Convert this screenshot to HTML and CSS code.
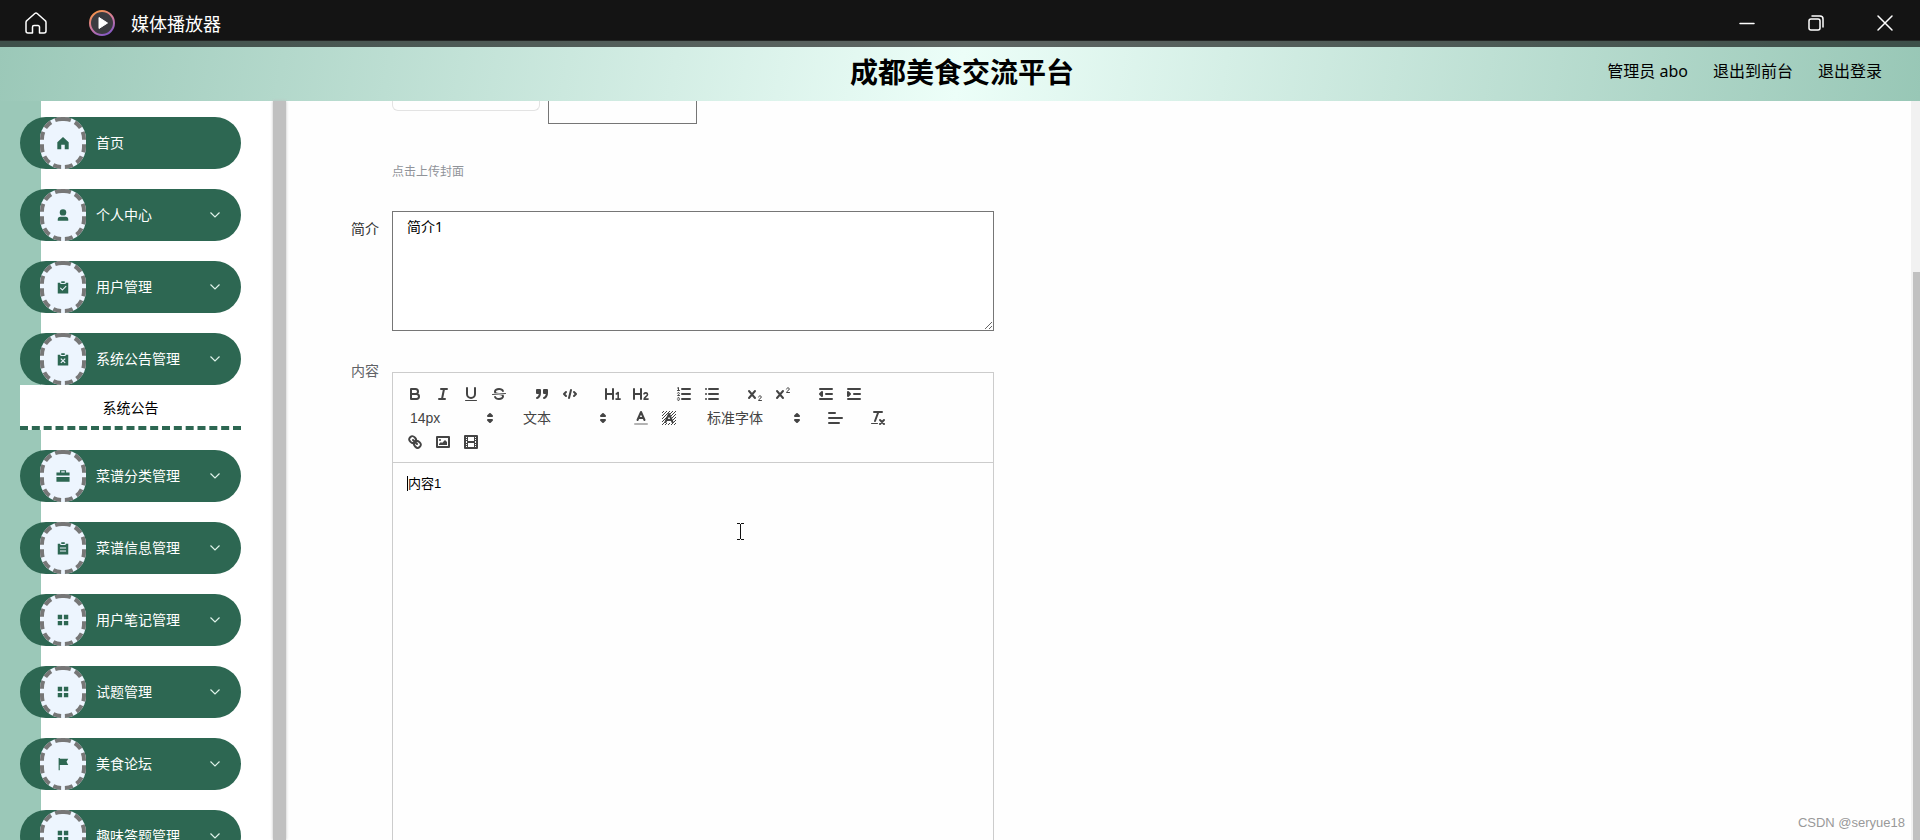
FILE: index.html
```html
<!DOCTYPE html>
<html lang="zh-CN">
<head>
<meta charset="utf-8">
<title>成都美食交流平台</title>
<link rel="stylesheet" href="styles.css">
</head>
<body>
<svg class="defs" aria-hidden="true">
  <defs>
    <linearGradient id="ring" x1="0.2" y1="0" x2="0.7" y2="1"><stop offset="0" stop-color="#f79446"/><stop offset=".5" stop-color="#d27ba0"/><stop offset="1" stop-color="#8458c4"/></linearGradient>
    <pattern id="hatch" width="3" height="3" patternUnits="userSpaceOnUse"><path d="M0 2h1v1H0zM1 1h1v1H1zM2 0h1v1H2z" fill="#444"/></pattern>
    <symbol id="chevron" viewBox="0 0 12 12"><path d="M1.500 3.500 6 8 10.500 3.500" fill="none" stroke="#dff3ea" stroke-width="1.200"/></symbol>
    <symbol id="caret" viewBox="0 0 18 18"><path class="fs" d="M7 11 9 13 11 11zM7 7 9 5 11 7z"/></symbol>
    <symbol id="grid" viewBox="0 0 16 16"><path d="M2 2h5v5H2zM9 2h5v5H9zM2 9h5v5H2zM9 9h5v5H9z"/></symbol>
    <symbol id="dashes" viewBox="0 0 46 52"><path class="dash" d="M23 2h-1A20 20 0 0 0 2 22v8A20 20 0 0 0 22 50h1"/><path class="dash" d="M23 2h1A20 20 0 0 1 44 22v8A20 20 0 0 1 24 50h-1"/></symbol>
  </defs>
</svg>
<div class="page">
  <header class="titlebar">
    <button class="win" aria-label="主页"><svg width="24" height="24" viewBox="0 0 24 24"><path d="M3 9.500 10.800 2.500a1.800 1.800 0 0 1 2.400 0L21 9.500a2 2 0 0 1 1 1.700V20a2 2 0 0 1-2 2h-4.500v-6a1.500 1.500 0 0 0-1.500-1.500h-4A1.500 1.500 0 0 0 8.500 16v6H4a2 2 0 0 1-2-2v-8.800a2 2 0 0 1 1-1.700z" class="white"/></svg></button>
    <svg class="player" width="28" height="28" viewBox="0 0 28 28"><circle cx="14" cy="14" r="12" fill="#3b3b40" stroke="url(#ring)" stroke-width="2"/><path d="M11 8.500 19.500 14 11 19.500z" fill="#fff" stroke="#fff" stroke-linejoin="round"/></svg>
    <span class="apptitle">媒体播放器</span>
    <div class="controls">
      <button class="win" aria-label="最小化"><svg width="18" height="18" viewBox="0 0 18 18"><path class="white" d="M2 9.500h14"/></svg></button>
      <button class="win" aria-label="还原"><svg width="18" height="18" viewBox="0 0 18 18"><rect class="white" x="2" y="5" width="11" height="11" rx="2"/><path class="white" d="M5 2h8a3 3 0 0 1 3 3v8"/></svg></button>
      <button class="win" aria-label="关闭"><svg width="18" height="18" viewBox="0 0 18 18"><path class="white" d="M2 2 16 16M16 2 2 16"/></svg></button>
    </div>
  </header>

  <div class="banner">
    <h1>成都美食交流平台</h1>
    <div class="account"><span>管理员 abo</span><a href="#">退出到前台</a><a href="#">退出登录</a></div>
  </div>

  <div class="body">
    <nav class="side">
      <button class="item"><span class="badge"><svg class="edge"><use href="#dashes"/></svg><svg class="icon" viewBox="0 0 16 16"><path d="M8 1 14.500 7v8H10v-5H6v5H1.500V7z"/></svg></span><span>首页</span></button>
      <button class="item"><span class="badge"><svg class="edge"><use href="#dashes"/></svg><svg class="icon" viewBox="0 0 16 16"><circle cx="8" cy="5" r="3.700"/><path d="M2 14.500V13a3 3 0 0 1 3-3h6a3 3 0 0 1 3 3v1.500z"/></svg></span><span>个人中心</span><svg class="chev"><use href="#chevron"/></svg></button>
      <button class="item"><span class="badge"><svg class="edge"><use href="#dashes"/></svg><svg class="icon" viewBox="0 0 16 16"><path fill-rule="evenodd" d="M2 3h3v1.500h6V3h3v12.500H2zM4.500 9.500 7.300 12.300 12 7.500 11.200 6.700 7.300 10.700 5.300 8.700z"/><path d="M6 1.500h4V3.500H6z"/></svg></span><span>用户管理</span><svg class="chev"><use href="#chevron"/></svg></button>
      <div class="group">
        <button class="item"><span class="badge"><svg class="edge"><use href="#dashes"/></svg><svg class="icon" viewBox="0 0 16 16"><path d="M2 3h3v1.500h6V3h3v12.500H2zM6 1.500h4V3.500H6z"/><path d="M5.500 7.500 10.500 12.500M10.500 7.500 5.500 12.500" stroke="#edf5fe" stroke-width="1.400"/></svg></span><span>系统公告管理</span><svg class="chev"><use href="#chevron"/></svg></button>
        <a class="sub" href="#">系统公告</a>
      </div>
      <button class="item"><span class="badge"><svg class="edge"><use href="#dashes"/></svg><svg class="icon" viewBox="0 0 16 16"><path fill-rule="evenodd" d="M4.500 4V1.500h7V4h4v3.500H.5V4zM6 4h4V2.700H6zM.5 9h15v5.500H.5z"/></svg></span><span>菜谱分类管理</span><svg class="chev"><use href="#chevron"/></svg></button>
      <button class="item"><span class="badge"><svg class="edge"><use href="#dashes"/></svg><svg class="icon" viewBox="0 0 16 16"><path d="M2 3h3v1.500h6V3h3v12.500H2zM6 1.500h4V3.500H6z"/><path d="M4.500 8h7M4.500 11.500h7" stroke="#edf5fe" stroke-width="1.200"/></svg></span><span>菜谱信息管理</span><svg class="chev"><use href="#chevron"/></svg></button>
      <button class="item"><span class="badge"><svg class="edge"><use href="#dashes"/></svg><svg class="icon"><use href="#grid"/></svg></span><span>用户笔记管理</span><svg class="chev"><use href="#chevron"/></svg></button>
      <button class="item"><span class="badge"><svg class="edge"><use href="#dashes"/></svg><svg class="icon"><use href="#grid"/></svg></span><span>试题管理</span><svg class="chev"><use href="#chevron"/></svg></button>
      <button class="item"><span class="badge"><svg class="edge"><use href="#dashes"/></svg><svg class="icon" viewBox="0 0 16 16"><path d="M3 1h1.300v1H14l-2 3.500L14 9H4.300v6H3z"/></svg></span><span>美食论坛</span><svg class="chev"><use href="#chevron"/></svg></button>
      <button class="item"><span class="badge"><svg class="edge"><use href="#dashes"/></svg><svg class="icon"><use href="#grid"/></svg></span><span>趣味答题管理</span><svg class="chev"><use href="#chevron"/></svg></button>
    </nav>
    <div class="divider"></div>

    <main class="content">
      <form class="form">
        <div class="field">
          <div class="uploads"><div class="thumb"></div><div class="picker"></div></div>
          <p class="hint">点击上传封面</p>
        </div>
        <label class="label dark" for="intro">简介</label>
        <textarea class="field intro" id="intro">简介1</textarea>
        <span class="label body-label" id="body-label">内容</span>
        <div class="field editor">
          <div class="toolbar">
            <div class="tools">
              <button type="button" aria-label="粗体"><svg viewBox="0 0 18 18"><path class="s" d="M5 4H9.500a2.500 2.500 0 0 1 0 5H5zM5 9h5.500a2.500 2.500 0 0 1 0 5H5z"/></svg></button>
              <button type="button" aria-label="斜体"><svg viewBox="0 0 18 18"><path class="s" d="M7 4h6M5 14h6M8 14 10 4"/></svg></button>
              <button type="button" aria-label="下划线"><svg viewBox="0 0 18 18"><path class="s" d="M5 3V9a4 4 0 0 0 8 0V3"/><rect class="f" x="3" y="15" width="12" height="1" rx=".5"/></svg></button>
              <button type="button" aria-label="删除线"><svg viewBox="0 0 18 18"><path class="s t" d="M15.500 8.500 2.500 9.500"/><path class="f" d="M9.007,8C6.542,7.791,6,7.519,6,6.500,6,5.792,7.283,5,9,5c1.571,0,2.765.679,2.969,1.309a1,1,0,0,0,1.900-.617C13.356,4.106,11.354,3,9,3,6.200,3,4,4.538,4,6.500a3.200,3.200,0,0,0,.5,1.843ZM8.984,10C11.457,10.208,12,10.479,12,11.500c0,.708-1.283,1.500-3,1.500-1.571,0-2.765-.679-2.969-1.309a1,1,0,1,0-1.900.617C4.644,13.894,6.646,15,9,15c2.800,0,5-1.538,5-3.500a3.200,3.200,0,0,0-.5-1.843Z"/></svg></button>
            </div>
            <div class="tools">
              <button type="button" aria-label="引用"><svg viewBox="0 0 18 18"><path class="fs" d="M4 5h3v3H4zM11 5h3v3h-3zM7 8c0 4.031-3 5-3 5M14 8c0 4.031-3 5-3 5"/></svg></button>
              <button type="button" aria-label="代码"><svg viewBox="0 0 18 18"><path class="s" d="M5 7 3 9 5 11M13 7 15 9 13 11M10 5 8 13"/></svg></button>
            </div>
            <div class="tools">
              <button type="button" aria-label="标题 1"><svg viewBox="0 0 18 18"><path class="s" d="M2 4v10M9 4v10M2 9h7"/><path class="s n" d="M12.300 9 14.200 7.500V14M12 14.100h4.200"/></svg></button>
              <button type="button" aria-label="标题 2"><svg viewBox="0 0 18 18"><path class="s" d="M2 4v10M9 4v10M2 9h7"/><path class="s n" d="M12 8.800c1-1.400 3.500-1.300 3.500.6 0 1.800-3 2.700-3.400 4.700h4"/></svg></button>
            </div>
            <div class="tools">
              <button type="button" aria-label="有序列表"><svg viewBox="0 0 18 18"><path class="s" d="M7 4h8M7 9h8M7 14h8"/><path class="s t" d="M2.500 5.500h2M2.500 3l1-.5v3M4.500 10.500h-2c0-.234 1.850-1.076 1.850-2.234a.959.959 0 0 0-1.850-.11M2.500 14.846a.959.959 0 0 0 1.850-.109.700.700 0 0 0-.6-.737.688.688 0 0 0 .6-.736.959.959 0 0 0-1.850-.109"/></svg></button>
              <button type="button" aria-label="无序列表"><svg viewBox="0 0 18 18"><path class="s" d="M6 4h9M6 9h9M6 14h9M3 4h.01M3 9h.01M3 14h.01"/></svg></button>
            </div>
            <div class="tools">
              <button type="button" aria-label="下标"><svg viewBox="0 0 18 18"><path class="s" d="M3 6 9 13M9 6 3 13"/><path class="s t" d="M12.500 12c.4-1.700 2.800-1.500 2.800 0s-2.800 2-2.800 3.500h3"/></svg></button>
              <button type="button" aria-label="上标"><svg viewBox="0 0 18 18"><path class="s" d="M3 6 9 13M9 6 3 13"/><path class="s t" d="M12.500 4c.4-1.700 2.800-1.500 2.800 0s-2.800 2-2.800 3.500h3"/></svg></button>
            </div>
            <div class="tools">
              <button type="button" aria-label="减少缩进"><svg viewBox="0 0 18 18"><path class="s" d="M3 4h12M3 14h12M9 9h6"/><path class="fs" d="M5 7v4L3 9z"/></svg></button>
              <button type="button" aria-label="增加缩进"><svg viewBox="0 0 18 18"><path class="s" d="M3 4h12M3 14h12M9 9h6"/><path class="fs" d="M3 7v4l2-2z"/></svg></button>
            </div>
            <div class="tools">
              <span class="pick"><select aria-label="字号"><option>14px</option></select><svg><use href="#caret"/></svg></span>
            </div>
            <div class="tools">
              <span class="pick"><select aria-label="标题"><option>文本</option></select><svg><use href="#caret"/></svg></span>
            </div>
            <div class="tools">
              <button type="button" aria-label="文字颜色"><svg viewBox="0 0 18 18"><path class="s" opacity=".4" d="M3 15h12"/><path class="s" d="M5.500 11 9 3 12.500 11M6.400 9h5.200"/></svg></button>
              <button type="button" aria-label="背景颜色"><svg viewBox="0 0 18 18"><rect x="2" y="2" width="14" height="14" fill="url(#hatch)"/><path d="M9 4 13 14H5z" fill="#fff"/><path class="s" d="M5.500 13 9 5 12.500 13M6.400 11h5.200"/></svg></button>
            </div>
            <div class="tools">
              <span class="pick wide"><select aria-label="字体"><option>标准字体</option></select><svg><use href="#caret"/></svg></span>
            </div>
            <div class="tools">
              <button type="button" aria-label="对齐"><svg viewBox="0 0 18 18"><path class="s" d="M3 9h13M3 14h10M3 4h6"/></svg></button>
            </div>
            <div class="tools">
              <button type="button" aria-label="清除格式"><svg viewBox="0 0 18 18"><path class="s" d="M5 3h8M6 12 9.350 3M11 11 15 15M15 11 11 15"/><rect class="f" x="2" y="14" width="7" height="1" rx=".5"/></svg></button>
            </div>
            <div class="tools">
              <button type="button" aria-label="链接"><svg viewBox="0 0 18 18"><path class="s" d="M7 7 11 11M8.900,4.577a3.476,3.476,0,0,1,.36,4.679A3.476,3.476,0,0,1,4.577,8.900C3.185,7.500,2.035,6.400,4.217,4.217S7.500,3.185,8.900,4.577ZM13.423,9.100a3.476,3.476,0,0,0-4.679-.36,3.476,3.476,0,0,0,.36,4.679c1.392,1.392,2.500,2.542,4.679.36S14.815,10.500,13.423,9.100Z"/></svg></button>
              <button type="button" aria-label="图片"><svg viewBox="0 0 18 18"><rect class="s" x="3" y="4" width="12" height="10"/><circle class="f" cx="6" cy="7" r="1"/><path class="f" d="M5 12v-1l2-2 1 1 3-3 2 2v3z"/></svg></button>
              <button type="button" aria-label="视频"><svg viewBox="0 0 18 18"><rect class="s" x="3" y="3" width="12" height="12"/><path class="f" d="M5 3h1v12H5zM12 3h1v12h-1zM5 8h8v2H5zM3 5h3v1H3zM3 7h3v1H3zM3 10h3v1H3zM3 12h3v1H3zM12 5h3v1h-3zM12 7h3v1h-3zM12 10h3v1h-3zM12 12h3v1h-3z"/></svg></button>
            </div>
          </div>
          <div class="paper" contenteditable="true" role="textbox" aria-labelledby="body-label"><span class="insertion">内容1</span></div>
          <svg class="ibeam" width="9" height="17" viewBox="0 0 9 17"><path d="M1 .5h3M5 .5h3M4.500 1v15M1 16.500h3M5 16.500h3" stroke="#111"/></svg>
        </div>
      </form>
    </main>
    <div class="scrollbar"><div class="thumb-bar"></div></div>
  </div>
  <span class="watermark">CSDN @seryue18</span>
</div>
</body>
</html>
```
FILE: styles.css
```css
* { box-sizing: border-box; }
body { margin: 0; font: 14px "Noto Sans", "Noto Sans CJK SC", sans-serif; color: #000; }
button { border: 0; background: none; padding: 0; font: inherit; color: inherit; }
a { color: inherit; text-decoration: none; }
.defs { position: absolute; width: 0; height: 0; }
.page { position: relative; height: 100vh; overflow: hidden; display: flex; flex-direction: column; background: #fefefe; }

.titlebar { flex: none; display: flex; align-items: center; height: 41px; padding: 5px 24px 0; background: #141414; border-bottom: 1px solid #242625; color: #fff; }
.win { display: flex; }
.white { fill: none; stroke: #fff; stroke-width: 1.5; stroke-linecap: round; stroke-linejoin: round; }
.player { margin: 0 15px 0 40px; }
.apptitle { font-size: 18px; line-height: 28px; padding-top: 2px; }
.controls { display: flex; gap: 51px; margin-left: auto; padding-right: 2px; }

.banner { flex: none; display: grid; grid-template-columns: 1fr auto 1fr; align-items: center; height: 60px; padding: 0 38px 6px 42px; border-top: 6px solid rgba(0, 0, 0, .6); background: linear-gradient(100deg, #9bc8b8, #ecfef8 50%, #98c7b6) border-box; }
.banner h1 { grid-column: 2; margin: 0; font: 700 28px/40px "Noto Sans CJK SC", sans-serif; }
.account { display: flex; justify-content: flex-end; gap: 25px; font-size: 16px; line-height: 24px; }

.body { flex: 1; min-height: 0; display: flex; }
.side { flex: none; display: flex; flex-direction: column; gap: 20px; width: 273px; padding: 16px 32px 0 20px; background: linear-gradient(90deg, #9bc8b8 41px, #fff 41px); overflow: hidden; }
.item { flex: none; display: flex; align-items: center; gap: 10px; width: 100%; height: 52px; padding: 0 20px; border-radius: 26px; background: #2d6752; color: #fff; line-height: 20px; }
.badge { display: grid; place-items: center; width: 46px; height: 52px; border-radius: 22px; background: #edf5fe; }
.badge svg { grid-area: 1 / 1; }
.edge { width: 46px; height: 52px; }
.dash { fill: none; stroke: #777; stroke-width: 4; stroke-dasharray: 8 4.5 8 4.5 8 4.5 8 4.5 8 4.5 8 20; }
.icon { width: 14px; height: 14px; fill: #2d6752; }
.chev { width: 12px; height: 12px; margin-left: auto; }
.group { flex: none; }
.sub { display: block; height: 45px; border-bottom: 4px dashed #2d6752; background: #fff; text-align: center; line-height: 46px; }
.divider { flex: none; width: 13px; background: #c0c0c0; box-shadow: 0 0 3px #c0c0c0; }

.content { flex: 1; min-width: 0; overflow: hidden; }
.form { display: grid; grid-template-columns: 93px minmax(0, 602px); column-gap: 13px; }
.field { grid-column: 2; }
.uploads { display: flex; align-items: flex-start; gap: 8px; height: 61px; }
.thumb { width: 148px; height: 10px; border: 1px solid #e3e3e3; border-top: 0; border-radius: 0 0 6px 6px; }
.picker { width: 149px; height: 23px; border: 1px solid #767676; border-top: 0; }
.hint { margin: 0 0 29px; color: #909399; font-size: 12px; line-height: 20px; }
.label { text-align: right; line-height: 20px; padding-top: 8px; color: #606266; }
.dark { color: #333; }
.body-label { padding-top: 30px; }
.intro { display: block; width: 100%; height: 120px; padding: 4px 14px; border: 1px solid #767676; background: #fff; font: inherit; line-height: 21px; color: #000; resize: vertical; }
.editor { position: relative; margin-top: 41px; }
.toolbar { display: flex; flex-wrap: wrap; padding: 9px 8px 8px; border: 1px solid #ccc; }
.tools { display: flex; margin-right: 15px; }
.tools button { width: 28px; height: 24px; padding: 3px 5px; }
.tools svg { display: block; width: 18px; height: 18px; }
.s, .fs { stroke: #444; stroke-width: 2; stroke-linecap: round; stroke-linejoin: round; fill: none; }
.fs { fill: #444; }
.f { fill: #444; }
.t { stroke-width: 1; }
.n { stroke-width: 1.6; }
.pick { display: flex; align-items: center; justify-content: flex-end; width: 98px; height: 24px; }
.wide { width: 108px; }
.pick select { flex: 1; min-width: 0; appearance: none; border: 0; padding: 0 0 0 9px; background: none; color: #444; font: 14px "Liberation Sans", "Noto Sans CJK SC", sans-serif; }
.paper { min-height: 400px; padding: 12px 15px; border: 1px solid #ccc; border-top: 0; font: 13px/18px "Liberation Sans", "Noto Sans CJK SC", sans-serif; outline: 0; }
.insertion { box-shadow: -1px 0 #000; }
.ibeam { position: absolute; left: 344px; top: 151px; }

.scrollbar { flex: none; width: 9px; padding-top: 171px; background: #f1f1f1; }
.thumb-bar { height: 100%; margin-left: 2px; background: #c1c1c1; }
.watermark { position: absolute; right: 15px; bottom: 8px; font: 13px/18px "Liberation Sans", sans-serif; color: #999; }
```
